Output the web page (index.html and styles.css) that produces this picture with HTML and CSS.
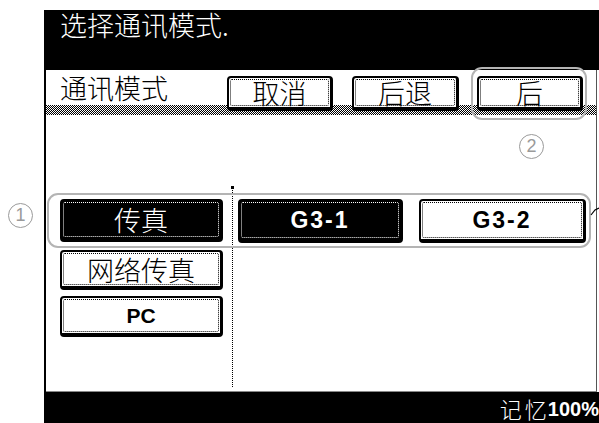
FILE: index.html
```html
<!DOCTYPE html>
<html lang="zh-CN">
<head>
<meta charset="utf-8">
<title>选择通讯模式</title>
<link rel="stylesheet" href="styles.css">
</head>
<body>
<div class="page">
  <div class="screen">
    <div class="titlebar">选择通讯模式.</div>
    <div class="toprow">
      <div class="label">通讯模式</div>
      <div class="btn btn-top">取消</div>
      <div class="btn btn-top">后退</div>
      <div class="btn btn-top">后</div>
    </div>
    <div class="content">
      <div class="leftcol">
        <div class="btn btn-dark btn-fax">传真</div>
        <div class="btn btn-netfax">网络传真</div>
        <div class="btn btn-pc latin">PC</div>
      </div>
      <div class="divider"></div>
      <div class="rightcol">
        <div class="btn btn-dark btn-g31 latin">G3-1</div>
        <div class="btn btn-g32 latin">G3-2</div>
      </div>
    </div>
    <div class="statusbar"><span class="mem">记忆</span><span class="pct">100%</span></div>
  </div>
  <span class="callout c1">1</span>
  <span class="callout c2">2</span>
  <div class="hl hl-top"></div>
  <div class="hl hl-row"></div>
  <svg class="leader" width="9" height="14" viewBox="0 0 9 14"><path d="M1 10 L5 5 L9 3" fill="none" stroke="#000" stroke-width="1.2"/></svg>
</div>
</body>
</html>
```
FILE: styles.css
```css
html, body {
  margin: 0;
  background: #fff;
}
body {
  font-family: "Noto Sans CJK SC", "Noto Sans", sans-serif;
}
.page {
  position: relative;
  width: 599px;
  height: 423px;
  padding: 10px 0 0 44px;
  box-sizing: border-box;
  overflow: hidden;
}
.screen {
  height: 413px;
  border-left: 2px solid #000;
  display: flex;
  flex-direction: column;
}
.titlebar {
  height: 60px;
  flex: none;
  background: #000;
  color: #fff;
  font-size: 27px;
  line-height: 27px;
  font-weight: 300;
  padding: 1px 0 0 14px;
  box-sizing: border-box;
}
.toprow {
  height: 45px;
  flex: none;
  display: flex;
  align-items: flex-start;
  margin-right: 2px;
  border-right: 1px solid #555;
  background:
    linear-gradient(#fff, #fff) 0 0 / 100% 35px no-repeat,
    repeating-conic-gradient(#000 0 25%, #fff 0 50%) 0 0 / 2px 2px;
}
.label {
  width: 181px;
  flex: none;
  box-sizing: border-box;
  padding-left: 14px;
  margin-top: 4px;
  font-size: 27px;
  line-height: 27px;
  font-weight: 300;
}
.btn {
  position: relative;
  box-sizing: border-box;
  border: 2px solid #000;
  border-right-width: 3px;
  border-bottom-width: 4px;
  border-radius: 4px;
  background: #fff;
  color: #000;
  display: flex;
  align-items: center;
  justify-content: center;
  font-size: 27px;
  line-height: 27px;
  font-weight: 300;
  flex: none;
}
.btn::after {
  content: "";
  position: absolute;
  inset: 1px;
  border: 1px dotted #000;
  border-radius: 2px;
}
.btn-dark {
  background: #000;
  color: #fff;
}
.btn-dark::after {
  border-color: #fff;
}
.btn-top {
  height: 35px;
  margin-top: 6px;
  width: 106px;
  margin-right: 19px;
}
.btn-top:nth-child(3) {
  width: 107px;
  margin-right: 18px;
}
.content {
  flex: 1;
  display: flex;
  margin-right: 2px;
  border-right: 1px solid #555;
  border-bottom: 1px solid #888;
}
.leftcol {
  padding: 84px 0 0 14px;
  display: flex;
  flex-direction: column;
}
.btn-fax {
  width: 163px;
  height: 43px;
}
.btn-netfax {
  width: 163px;
  height: 40px;
  margin-top: 8px;
}
.btn-pc {
  width: 163px;
  height: 41px;
  margin-top: 6px;
}
.latin {
  font-family: "Liberation Sans", Arial, sans-serif;
  font-weight: 700;
}
.btn-pc {
  font-size: 21px;
}
.divider {
  position: relative;
  width: 0;
  margin: 71px 0 4px 9px;
  border-left: 1px dotted #000;
}
.divider::before {
  content: "";
  position: absolute;
  left: -2px;
  top: 0;
  width: 3px;
  height: 3px;
  background: #000;
}
.rightcol {
  display: flex;
  align-items: flex-start;
  gap: 16px;
  padding-top: 84px;
  margin-left: 5px;
}
.btn-g31, .btn-g32 {
  font-size: 23px;
  letter-spacing: 2px;
  height: 44px;
}
.btn-g31 {
  width: 165px;
}
.btn-g32 {
  width: 167px;
}
.statusbar {
  height: 31px;
  flex: none;
  background: #000;
  color: #fff;
  display: flex;
  justify-content: flex-end;
  align-items: center;
}
.mem {
  font-size: 22px;
  line-height: 26px;
  font-weight: 300;
  letter-spacing: 3px;
  margin-right: -2px;
}
.pct {
  font-family: "Liberation Sans", Arial, sans-serif;
  font-weight: 700;
  font-size: 20px;
  line-height: 24px;
  padding-top: 2px;
}
.callout {
  position: absolute;
  box-sizing: border-box;
  width: 25px;
  height: 25px;
  border: 1px solid #9a9a9a;
  border-radius: 50%;
  color: #9a9a9a;
  font-family: "Liberation Sans", Arial, sans-serif;
  font-size: 18px;
  line-height: 23px;
  text-align: center;
}
.c1 {
  left: 8px;
  top: 203px;
}
.c2 {
  left: 519px;
  top: 134px;
}
.hl {
  position: absolute;
  box-sizing: border-box;
  border: 2px solid #b4b4b4;
  border-radius: 11px;
}
.hl-top {
  left: 471px;
  top: 67px;
  width: 116px;
  height: 53px;
}
.hl-row {
  left: 47px;
  top: 193px;
  width: 544px;
  height: 55px;
}
.leader {
  position: absolute;
  left: 590px;
  top: 205px;
}
```
